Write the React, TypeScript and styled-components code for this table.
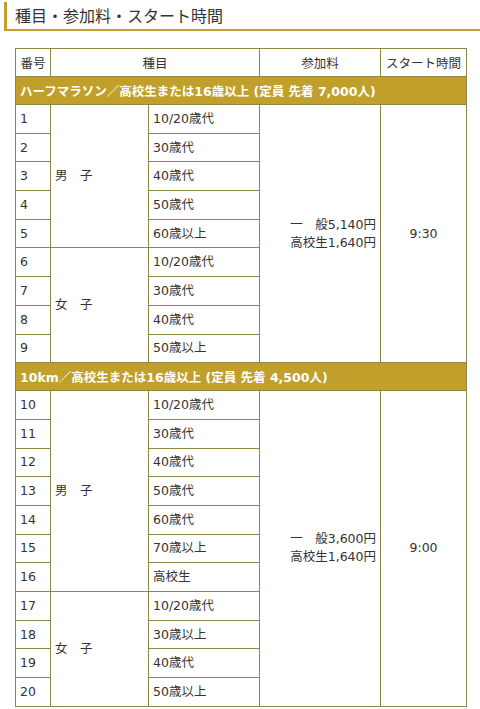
import React from 'react';
import styled, { createGlobalStyle } from 'styled-components';

const gold = '#c0a02a';
const line = '#8e8748';

const GlobalStyle = createGlobalStyle`
  html, body {
    margin: 0;
    padding: 0;
    background: #fff;
  }
  body {
    font-family: "DejaVu Sans", "Noto Sans CJK JP", sans-serif;
    color: #333;
  }
`;

const Page = styled('div')`
  padding: 2px 0 0 4px;
`;

const Heading = styled('h2')`
  margin: 0;
  height: 27px;
  padding-left: 8px;
  border-left: 3px solid ${gold};
  border-bottom: 2px solid ${gold};
  font-family: "Noto Sans CJK JP", sans-serif;
  font-size: 16px;
  font-weight: normal;
  line-height: 26px;
  color: #333;
`;

const Table = styled('table')`
  margin: 17px 0 0 11px;
  width: 451px;
  border-collapse: collapse;
  table-layout: fixed;
  font-size: 12.5px;
`;

const Cell = styled('td')<{ $align?: string }>`
  border: 1px solid ${line};
  padding: 0 4px;
  height: 27.7px;
  text-align: ${(p) => p.$align || 'left'};
  vertical-align: middle;
  line-height: 18px;
  white-space: nowrap;
`;

const HeadCell = styled('th')`
  border: 1px solid ${line};
  height: 27px;
  padding: 0 4px;
  font-weight: normal;
  font-size: 12.5px;
  text-align: center;
  color: #333;
`;

const Section = styled('td')`
  background: ${gold};
  border: 1px solid ${line};
  color: #fff;
  font-weight: bold;
  height: 27px;
  padding: 0 4px;
  font-size: 12.5px;
  white-space: nowrap;
`;

type Group = { sex: string; cats: string[] };
type Race = { title: string; fee: string[]; start: string; groups: Group[] };

const races: Race[] = [
  {
    title: 'ハーフマラソン／高校生または16歳以上 (定員 先着 7,000人)',
    fee: ['一　般5,140円', '高校生1,640円'],
    start: '9:30',
    groups: [
      { sex: '男　子', cats: ['10/20歳代', '30歳代', '40歳代', '50歳代', '60歳以上'] },
      { sex: '女　子', cats: ['10/20歳代', '30歳代', '40歳代', '50歳以上'] },
    ],
  },
  {
    title: '10km／高校生または16歳以上 (定員 先着 4,500人)',
    fee: ['一　般3,600円', '高校生1,640円'],
    start: '9:00',
    groups: [
      { sex: '男　子', cats: ['10/20歳代', '30歳代', '40歳代', '50歳代', '60歳代', '70歳以上', '高校生'] },
      { sex: '女　子', cats: ['10/20歳代', '30歳以上', '40歳代', '50歳以上'] },
    ],
  },
];

const App = () => {
  let no = 0;
  return (
    <Page>
      <GlobalStyle />
      <Heading>種目・参加料・スタート時間</Heading>
      <Table>
        <colgroup>
          <col style={{ width: 35 }} />
          <col style={{ width: 98 }} />
          <col style={{ width: 111 }} />
          <col style={{ width: 121 }} />
          <col style={{ width: 86 }} />
        </colgroup>
        <thead>
          <tr>
            <HeadCell>番号</HeadCell>
            <HeadCell colSpan={2}>種目</HeadCell>
            <HeadCell>参加料</HeadCell>
            <HeadCell>スタート時間</HeadCell>
          </tr>
        </thead>
        {races.map((race) => {
          const total = race.groups.reduce((n, g) => n + g.cats.length, 0);
          return (
            <tbody key={race.title}>
              <tr>
                <Section colSpan={5}>{race.title}</Section>
              </tr>
              {race.groups.map((g, gi) =>
                g.cats.map((c, ci) => {
                  no += 1;
                  const first = gi === 0 && ci === 0;
                  return (
                    <tr key={no}>
                      <Cell>{no}</Cell>
                      {ci === 0 && <Cell rowSpan={g.cats.length}>{g.sex}</Cell>}
                      <Cell>{c}</Cell>
                      {first && (
                        <Cell rowSpan={total} $align="right">
                          {race.fee.map((f) => (
                            <div key={f}>{f}</div>
                          ))}
                        </Cell>
                      )}
                      {first && (
                        <Cell rowSpan={total} $align="center">
                          {race.start}
                        </Cell>
                      )}
                    </tr>
                  );
                })
              )}
            </tbody>
          );
        })}
      </Table>
    </Page>
  );
};

export default App;
